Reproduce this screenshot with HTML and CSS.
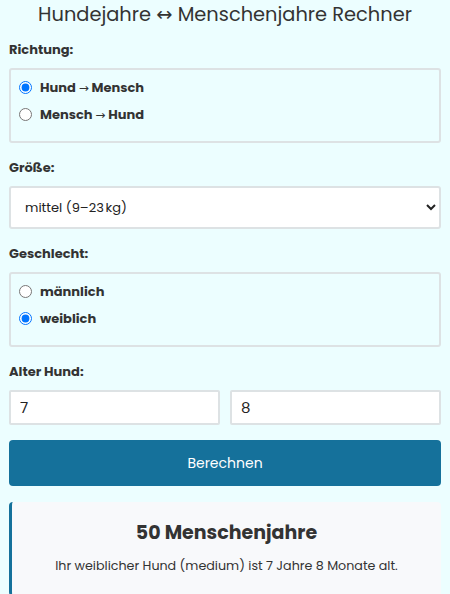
FILE: index.html
```html
<!DOCTYPE html>
<html lang="de">
<head>
<meta charset="utf-8">
<title>Hundejahre Rechner</title>
<link rel="stylesheet" href="styles.css">
</head>
<body>
<div class="page">
  <h1 class="title">Hundejahre ↔ Menschenjahre Rechner</h1>

  <div class="group">
    <div class="label">Richtung:</div>
    <div class="box">
      <label class="opt"><input type="radio" name="dir" checked><span>Hund <span class="arrow">→</span> Mensch</span></label>
      <label class="opt"><input type="radio" name="dir"><span>Mensch <span class="arrow">→</span> Hund</span></label>
    </div>
  </div>

  <div class="group">
    <div class="label">Größe:</div>
    <select class="select">
      <option>mittel (9–23&#8239;kg)</option>
    </select>
  </div>

  <div class="group">
    <div class="label">Geschlecht:</div>
    <div class="box">
      <label class="opt"><input type="radio" name="sex"><span>männlich</span></label>
      <label class="opt"><input type="radio" name="sex" checked><span>weiblich</span></label>
    </div>
  </div>

  <div class="group">
    <div class="label">Alter Hund:</div>
    <div class="inputs">
      <input class="field" type="text" value="7">
      <input class="field" type="text" value="8">
    </div>
  </div>

  <button class="btn">Berechnen</button>

  <div class="result">
    <div class="result-title">50 Menschenjahre</div>
    <div class="result-text">Ihr weiblicher Hund (medium) ist 7 Jahre 8 Monate alt.</div>
  </div>
</div>
</body>
</html>
```

FILE: styles.css
```css
html, body {
  margin: 0;
  padding: 0;
  background: #ecfeff;
}
body {
  font-family: "Poppins", "Open Sans", "DejaVu Sans", sans-serif;
  color: #333;
}
.page {
  padding: 0 9px;
}
.title {
  margin: 0 0 10px;
  font-size: 19.4px;
  font-weight: 400;
  line-height: 30px;
  text-align: center;
  color: #333;
}
.group {
  margin-bottom: 15px;
}
.label {
  font-size: 13px;
  font-weight: 700;
  line-height: 20px;
  margin-bottom: 8px;
}
.box {
  border: 2px solid #dde2e4;
  border-radius: 3px;
  padding: 4px 10px 13px 8px;
}
.opt {
  display: flex;
  align-items: center;
  height: 27px;
  font-size: 13px;
  font-weight: 700;
}
.opt input {
  margin: 0 8px 0 0;
  width: 13px;
  height: 13px;
}
.arrow {
  font-family: "DejaVu Sans", sans-serif;
  font-weight: 400;
  font-size: 12px;
}
.select {
  display: block;
  width: 100%;
  height: 43px;
  box-sizing: border-box;
  border: 2px solid #dde2e4;
  border-radius: 3px;
  background: #fff;
  padding: 0 8px 0 10px;
  font-family: inherit;
  font-size: 13px;
  color: #222;
}
.inputs {
  display: flex;
  gap: 10px;
}
.field {
  flex: 1;
  min-width: 0;
  height: 35px;
  box-sizing: border-box;
  border: 2px solid #dde2e4;
  border-radius: 2px;
  background: #fff;
  padding: 0 9px;
  font-family: inherit;
  font-size: 15px;
  color: #222;
}
.btn {
  display: block;
  width: 100%;
  height: 46px;
  margin-top: 5px;
  border: none;
  border-radius: 4px;
  background: #15719b;
  color: #fff;
  font-family: inherit;
  font-size: 14px;
}
.result {
  margin-top: 16px;
  background: #f8f9fb;
  border-left: 3px solid #15719b;
  border-radius: 4px;
  padding: 19px 10px 20px;
  text-align: center;
}
.result-title {
  font-size: 19px;
  font-weight: 700;
  line-height: 24px;
  margin-bottom: 11px;
}
.result-text {
  font-size: 12.7px;
  line-height: 20px;
}
```
